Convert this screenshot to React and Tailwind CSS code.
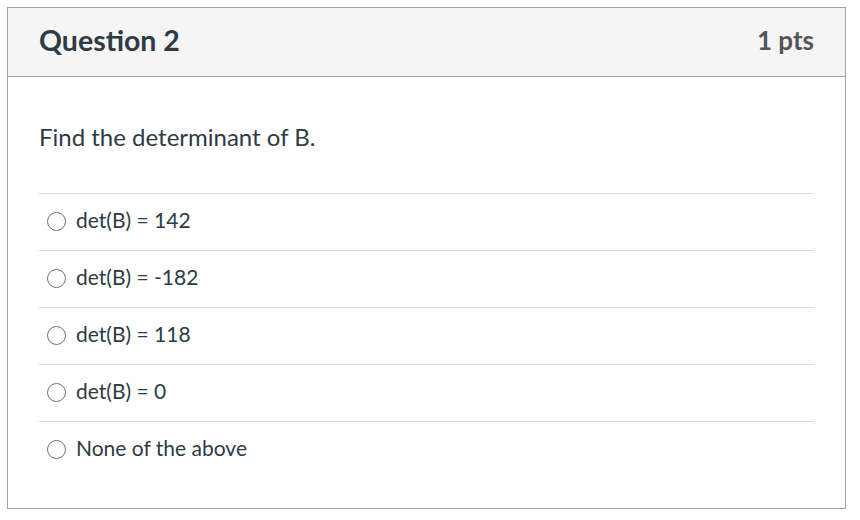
import React from "react";

const answers = [
  "det(B) = 142",
  "det(B) = -182",
  "det(B) = 118",
  "det(B) = 0",
  "None of the above",
];

function Answer({ label }) {
  return (
    <label className="flex h-[57px] items-center border-t border-[#dcdcdc] pb-[2px]">
      <span className="ml-[8px] h-[19px] w-[19px] rounded-full border border-[#707070] bg-white" />
      <span className="ml-[10px] pb-[3px] text-[21px] leading-[26px] text-[#2d3b45]">{label}</span>
    </label>
  );
}

export default function App() {
  return (
    <div className="bg-white p-[7px]" style={{ fontFamily: "Lato, 'Liberation Sans', sans-serif" }}>
      <div className="h-[502px] w-[839px] border border-[#a3a3a3] bg-white">
        <div className="flex h-[69px] items-center justify-between border-b border-[#a3a3a3] bg-[#f5f5f5] px-[31px] pb-[4px]">
          <h2 className="text-[28.5px] font-bold text-[#2d3b45]">Question 2</h2>
          <span className="text-[26px] font-bold text-[#555]">1 pts</span>
        </div>
        <div className="px-[31px]">
          <p className="pt-[45px] pb-[41px] text-[24px] leading-[30px] text-[#2d3b45]">
            Find the determinant of B.
          </p>
          <div>
            {answers.map((a) => (
              <Answer key={a} label={a} />
            ))}
          </div>
        </div>
      </div>
    </div>
  );
}
